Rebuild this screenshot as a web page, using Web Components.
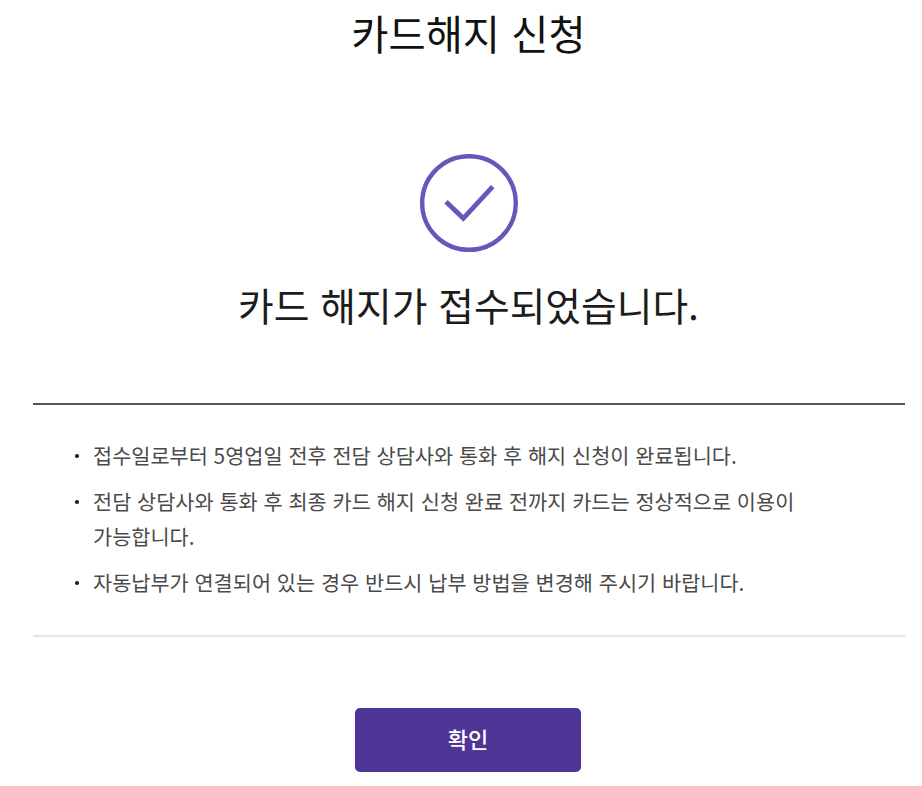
<!DOCTYPE html>
<html lang="ko">
<head>
<meta charset="utf-8">
<title>카드해지 신청</title>
<style>
html, body { margin: 0; background: #fff; }
body { font-family: "Noto Sans CJK KR", "Noto Sans", sans-serif; }
</style>
</head>
<body>
<cancel-page>
    <span slot="title">카드해지 신청</span>
    <result-message>카드 해지가 접수되었습니다.</result-message>
    <notice-list>
        <li>접수일로부터 5영업일 전후 전담 상담사와 통화 후 해지 신청이 완료됩니다.</li>
        <li>전담 상담사와 통화 후 최종 카드 해지 신청 완료 전까지 카드는 정상적으로 이용이 가능합니다.</li>
        <li>자동납부가 연결되어 있는 경우 반드시 납부 방법을 변경해 주시기 바랍니다.</li>
    </notice-list>
    <confirm-button>확인</confirm-button>
</cancel-page>
<script>
class cancelPage extends HTMLElement {
    constructor() {
        super();
        this.attachShadow({ mode: 'open' });
    }
    connectedCallback() {
        this.shadowRoot.innerHTML = `
            <style>
            :host{
                display: flex;
                flex-direction: column;
                padding: 0 17px 0 33px;
                color: #111;
            }
            h1{
                margin: 0;
                padding-right: 1px;
                height: 67px;
                line-height: 65px;
                font-size: 40.4px;
                font-weight: 400;
                text-align: center;
            }
            </style>
            <h1><slot name="title"></slot></h1>
            <slot></slot>
        `;
    }
}
class resultMessage extends HTMLElement {
    constructor() {
        super();
        this.attachShadow({ mode: 'open' });
    }
    connectedCallback() {
        this.shadowRoot.innerHTML = `
            <style>
            :host{
                display: flex;
                flex-direction: column;
                align-items: center;
                padding: 86px 1px 0 0;
                box-sizing: border-box;
                border-bottom: 2px solid #555;
                height: 338px;
            }
            svg{
                display: block;
                width: 100px;
                height: 100px;
            }
            p{
                margin: 23px 0 0;
                font-size: 38.8px;
                line-height: 56px;
                color: #1c1c1c;
            }
            </style>
            <svg viewBox="0 0 100 100" fill="none" stroke="#6a55bd">
                <circle cx="50" cy="50" r="46.800" stroke-width="4.400"></circle>
                <path d="M27 48.700 L44.300 65.300 L73.700 33.700" stroke-width="4.800"></path>
            </svg>
            <p><slot></slot></p>
        `;
    }
}
class noticeList extends HTMLElement {
    constructor() {
        super();
        this.attachShadow({ mode: 'open' });
    }
    connectedCallback() {
        this.shadowRoot.innerHTML = `
            <style>
            :host{
                display: block;
                padding: 33px 110px 35px 60px;
                border-bottom: 2px solid #e4e4e4;
                font-size: 20.800px;
                line-height: 35px;
                color: #4a4a4a;
            }
            ul{
                margin: 0;
                padding: 0;
                display: flex;
                flex-direction: column;
                gap: 11px;
            }
            ::slotted(li){
                list-style: none;
                position: relative;
            }
            </style>
            <ul><slot></slot></ul>
        `;
        this.querySelectorAll('li').forEach((li) => {
            const dot = document.createElement('dot-mark');
            li.prepend(dot);
        });
    }
}
class dotMark extends HTMLElement {
    constructor() {
        super();
        this.attachShadow({ mode: 'open' });
    }
    connectedCallback() {
        this.shadowRoot.innerHTML = `
            <style>
            :host{
                position: absolute;
                left: -18px;
                top: 16px;
                width: 3.500px;
                height: 3.500px;
                border-radius: 50%;
                background: #222;
            }
            </style>
        `;
    }
}
class confirmButton extends HTMLElement {
    constructor() {
        super();
        this.attachShadow({ mode: 'open' });
    }
    connectedCallback() {
        this.shadowRoot.innerHTML = `
            <style>
            :host{
                display: flex;
                justify-content: center;
                padding: 71px 2px 0 0;
            }
            button{
                width: 226px;
                height: 64px;
                padding: 0 0 5px;
                border: 0;
                border-radius: 5px;
                background: #4f3596;
                color: #fff;
                font: 500 22px "Noto Sans CJK KR", sans-serif;
            }
            </style>
            <button type="button"><slot></slot></button>
        `;
    }
}
customElements.define("cancel-page", cancelPage);
customElements.define("result-message", resultMessage);
customElements.define("notice-list", noticeList);
customElements.define("dot-mark", dotMark);
customElements.define("confirm-button", confirmButton);
</script>
</body>
</html>
